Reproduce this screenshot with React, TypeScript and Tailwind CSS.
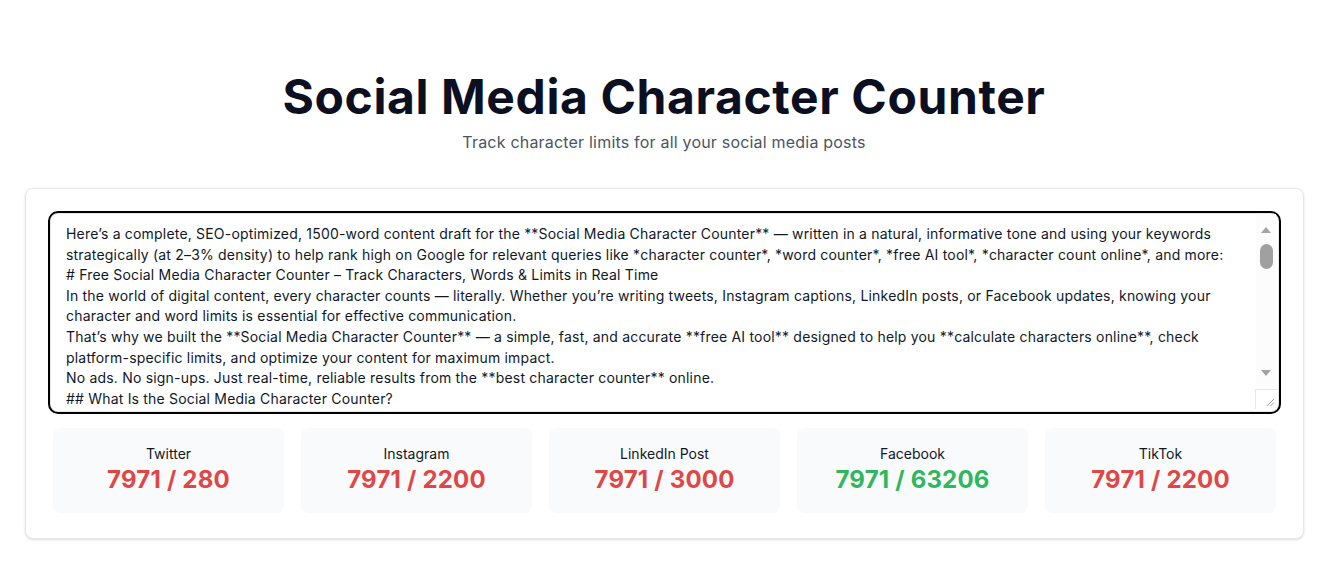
import React from 'react'

const DRAFT = `Here’s a complete, SEO-optimized, 1500-word content draft for the **Social Media Character Counter** — written in a natural, informative tone and using your keywords strategically (at 2–3% density) to help rank high on Google for relevant queries like *character counter*, *word counter*, *free AI tool*, *character count online*, and more:
# Free Social Media Character Counter – Track Characters, Words & Limits in Real Time
In the world of digital content, every character counts — literally. Whether you’re writing tweets, Instagram captions, LinkedIn posts, or Facebook updates, knowing your character and word limits is essential for effective communication.
That’s why we built the **Social Media Character Counter** — a simple, fast, and accurate **free AI tool** designed to help you **calculate characters online**, check platform-specific limits, and optimize your content for maximum impact.
No ads. No sign-ups. Just real-time, reliable results from the **best character counter** online.
## What Is the Social Media Character Counter?
The **Social Media Character Counter** is a free online tool that instantly counts the characters, words, and spaces in your text. It also shows how your content measures up against the limits of every major platform.
Simply paste or type your text, and the counter updates in real time.
## Why Character Limits Matter
Every platform has its own rules. Go over the limit and your post gets cut off, truncated, or rejected entirely.
## Platform Limits at a Glance
- Twitter / X: 280 characters
- Instagram captions: 2,200 characters
- LinkedIn posts: 3,000 characters
- Facebook posts: 63,206 characters
- TikTok captions: 2,200 characters`

const PLATFORMS = [
  { name: 'Twitter', limit: 280 },
  { name: 'Instagram', limit: 2200 },
  { name: 'LinkedIn Post', limit: 3000 },
  { name: 'Facebook', limit: 63206 },
  { name: 'TikTok', limit: 2200 },
]

const COUNT = 7971

// drawn scrollbar so the textarea looks the same in every browser
function FakeScrollbar() {
  return (
    <div className="pointer-events-none absolute top-[1px] right-[3px] bottom-[3px] flex w-[20px] flex-col items-center bg-[#fcfcfc]">
      <svg width="10" height="6" viewBox="0 0 10 6" className="mt-[13px]">
        <path d="M5 0 L10 6 L0 6 Z" fill="#a3a3a3" />
      </svg>
      <div className="mt-[11px] h-[25px] w-[13px] rounded-full bg-[#a0a0a0]" />
      <div className="flex-1" />
      <svg width="10" height="6" viewBox="0 0 10 6" className="mb-[13px]">
        <path d="M0 0 L10 0 L5 6 Z" fill="#a3a3a3" />
      </svg>
      <div className="relative h-[20px] w-[22px] border-t border-l border-[#e8e8e8] bg-white">
        <svg width="9" height="9" viewBox="0 0 9 9" className="absolute right-[2px] bottom-[2px]">
          <path d="M1 8 L8 1 M4.5 8 L8 4.5" stroke="#9a9a9a" strokeWidth="1" />
        </svg>
      </div>
    </div>
  )
}

export default function App() {
  return (
    <div
      className="min-h-screen bg-white px-6 pt-[73px] pb-8"
      style={{ fontFamily: 'Inter, "Noto Sans", Arial, sans-serif' }}
    >
      <div className="mx-auto max-w-7xl">
        {/* Header */}
        <div className="mb-[34px] text-center">
          <h1 className="text-5xl leading-none font-bold tracking-[0.6px] text-[#0b0f1f]">
            Social Media Character Counter
          </h1>
          <p className="mt-[9px] text-base tracking-[0.2px] text-gray-600">
            Track character limits for all your social media posts
          </p>
        </div>

        {/* Card */}
        <div className="ml-[1px] rounded-lg border border-gray-200 bg-white px-6 pt-6 pb-[25px] shadow-sm">
          <div className="relative">
            <textarea
              defaultValue={DRAFT}
              spellCheck={false}
              className="block h-[199px] w-full resize-none overflow-hidden rounded-lg border border-gray-200 py-[10px] pr-[40px] pl-[15px] text-sm leading-[20.6px] tracking-[0.19px] text-gray-900 outline-2 outline-black"
            />
            <FakeScrollbar />
          </div>

          <div className="mt-[16px] grid grid-cols-5 gap-[17px] px-[3px]">
            {PLATFORMS.map(({ name, limit }) => {
              const over = COUNT > limit
              return (
                <div key={name} className="rounded-lg bg-[#f9fafb] px-4 pt-[16px] pb-[17px] text-center">
                  <div className="text-sm leading-5 text-gray-900">{name}</div>
                  <div
                    className={
                      over
                        ? 'text-2xl leading-8 font-bold tracking-[0.2px] text-[#e04646]'
                        : 'text-2xl leading-8 font-bold tracking-[0.2px] text-[#2fb760]'
                    }
                  >
                    {COUNT} / {limit}
                  </div>
                </div>
              )
            })}
          </div>
        </div>
      </div>
    </div>
  )
}
